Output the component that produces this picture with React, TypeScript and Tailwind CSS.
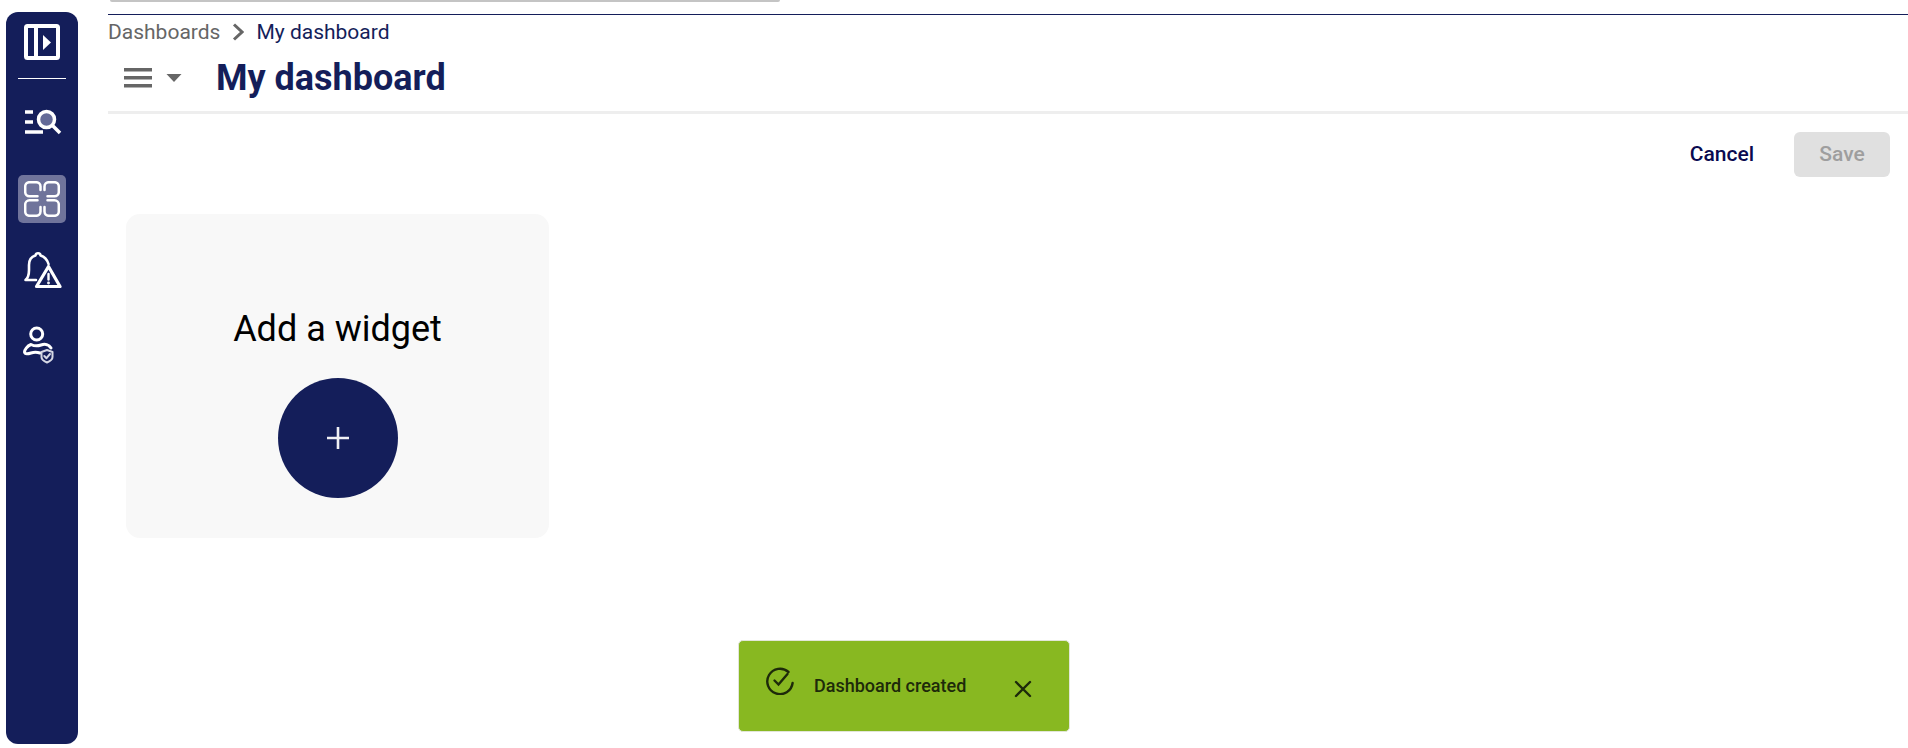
import React from "react";

const font = { fontFamily: "Roboto, sans-serif" };

function PanelIcon() {
  return (
    <svg width="36" height="36" viewBox="0 0 36 36" fill="none">
      <rect x="2" y="2" width="32" height="32" rx="1.5" stroke="white" strokeWidth="4" />
      <rect x="10" y="2" width="4" height="32" fill="white" />
      <path d="M19 11 L27 18.5 L19 26 Z" fill="white" />
    </svg>
  );
}

function SearchListIcon() {
  return (
    <svg width="38" height="26" viewBox="0 0 38 26" fill="none">
      <path d="M0 3H8M0 13H8M0 23H18" stroke="white" strokeWidth="3.500" />
      <circle cx="21.500" cy="10.500" r="8" fill="#646a98" stroke="white" strokeWidth="3.500" />
      <path d="M27.500 16.500L35 24" stroke="white" strokeWidth="3.500" />
    </svg>
  );
}

function GridIcon() {
  return (
    <svg width="36" height="36" viewBox="0 0 36 36" fill="none" stroke="white" strokeWidth="2.500" strokeLinecap="round">
      <path d="M13.500 15.300H5.500A4.300 4.300 0 0 1 1.200 11V5.500A4.300 4.300 0 0 1 5.500 1.200H12.200A4.300 4.300 0 0 1 16.500 5.500V9" />
      <path d="M23.500 15.300H30.500A4.300 4.300 0 0 0 34.800 11V5.500A4.300 4.300 0 0 0 30.500 1.200H24.800A4.300 4.300 0 0 0 20.500 5.500V9" />
      <path d="M13.500 19.300H5.500A4.300 4.300 0 0 0 1.200 23.600V30.500A4.300 4.300 0 0 0 5.500 34.800H12.200A4.300 4.300 0 0 0 16.500 30.500V26" />
      <path d="M23.500 19.300H30.500A4.300 4.300 0 0 1 34.800 23.600V30.500A4.300 4.300 0 0 1 30.500 34.800H24.800A4.300 4.300 0 0 1 20.500 30.500V26" />
    </svg>
  );
}

function BellIcon() {
  return (
    <svg width="38" height="38" viewBox="0 0 38 38" fill="none" stroke="white" strokeLinejoin="round" strokeLinecap="round">
      <path d="M12 29H1.500C4 27 5 24 5 19V14C5 8.500 8 5.500 11.500 4.500C11.500 1.500 16.500 1.500 16.500 4.500C20 5.500 23 8 24.500 13" strokeWidth="2.600" />
      <path d="M24.500 15.500L36 35.500H12.500Z" strokeWidth="3.200" />
      <path d="M24.500 23V28.500" strokeWidth="2.400" />
      <circle cx="24.500" cy="32" r="0.600" strokeWidth="1.600" />
    </svg>
  );
}

function UserShieldIcon() {
  return (
    <svg width="34" height="38" viewBox="0 0 34 38" fill="none" strokeLinecap="round" strokeLinejoin="round">
      <circle cx="13.700" cy="8" r="6" stroke="white" strokeWidth="3" />
      <path d="M28 22C26 18.500 22 17.500 18 19C14 20.500 11 20 8 18.500C4 20 1.500 24 1.500 26C2 28.500 5 28 8 27C11 26 14 26 17 27" stroke="white" strokeWidth="3" />
      <path d="M18.500 26L24 24L29.500 26V31C29.500 33.500 26.500 35.500 24 36.500C21.500 35.500 18.500 33.500 18.500 31Z" fill="#141e5a" stroke="#d5d7e4" strokeWidth="2" />
      <path d="M21.300 30L23.500 32.200L27 28" stroke="#d5d7e4" strokeWidth="2" />
    </svg>
  );
}

function Hamburger() {
  return (
    <svg width="28" height="20" viewBox="0 0 28 20" fill="#666666">
      <rect x="0" y="0" width="28" height="3.500" />
      <rect x="0" y="8" width="28" height="3.500" />
      <rect x="0" y="16" width="28" height="3.500" />
    </svg>
  );
}

function Caret() {
  return (
    <svg width="16" height="8" viewBox="0 0 16 8" fill="#666666">
      <path d="M0.500 0H15.500L8 8Z" />
    </svg>
  );
}

function Chevron() {
  return (
    <svg width="12" height="18" viewBox="0 0 12 18" fill="none" stroke="#666666" strokeWidth="3">
      <path d="M2 1.500L10 9L2 16.500" />
    </svg>
  );
}

function CheckCircle() {
  return (
    <svg width="28" height="28" viewBox="0 0 28 28" fill="none" stroke="#1d2a0a" strokeWidth="2.400" strokeLinecap="round">
      <path d="M22.500 5A12.700 12.700 0 1 0 26.600 16" />
      <path d="M8.500 13.500L12.500 17.500L21.500 7" />
    </svg>
  );
}

function Close() {
  return (
    <svg width="18" height="18" viewBox="0 0 18 18" fill="none" stroke="#1d2a0a" strokeWidth="2.400" strokeLinecap="round">
      <path d="M2 2L16 16M16 2L2 16" />
    </svg>
  );
}

export default function App() {
  return (
    <div className="relative flex h-[748px] w-[1908px] overflow-hidden bg-white" style={font}>
      <aside className="ml-[6px] mt-[12px] flex h-[732px] w-[72px] shrink-0 flex-col items-center rounded-[12px] bg-[#141e5a]">
        <div className="mt-[12px]">
          <PanelIcon />
        </div>
        <div className="mt-[18px] h-px w-[48px] bg-white" />
        <div className="ml-[4px] mt-[30px]">
          <SearchListIcon />
        </div>
        <div className="mt-[40px] flex h-[48px] w-[48px] items-center justify-center rounded-[5px] bg-[#70749b]">
          <GridIcon />
        </div>
        <div className="mt-[28px] ml-[2px]">
          <BellIcon />
        </div>
        <div className="mt-[37px] mr-[4px]">
          <UserShieldIcon />
        </div>
      </aside>

      <main className="ml-[30px] flex min-w-0 flex-1 flex-col">
        <div className="h-[14px] shrink-0">
          <div className="ml-[2px] h-[2px] w-[670px] rounded-b-[3px] border-b-2 border-[#c4c4c4]" />
        </div>
        <div className="h-px shrink-0 bg-[#141e5a]" />
        <nav className="mt-[7px] flex h-[20px] items-center text-[21px] leading-[20px]">
          <span className="text-[#666666]">Dashboards</span>
          <span className="ml-[12px] mr-[12px] flex">
            <Chevron />
          </span>
          <span className="text-[#141e5a]">My dashboard</span>
        </nav>
        <header className="mt-[11px] flex h-[50px] items-center">
          <div className="ml-[16px] flex items-center">
            <Hamburger />
            <span className="ml-[14px] flex">
              <Caret />
            </span>
          </div>
          <h1 className="ml-[34px] text-[36px] font-bold leading-[50px] text-[#141e5a]">My dashboard</h1>
        </header>
        <div className="mt-[8px] h-[3px] shrink-0 bg-[#eeeeee]" />

        <div className="mt-[18px] flex items-center justify-end pr-[18px]">
          <button className="text-[21px] font-medium leading-[45px] text-[#0a0a50]">Cancel</button>
          <button className="ml-[40px] h-[45px] w-[96px] rounded-[6px] bg-[#e0e0e0] text-[21px] font-medium text-[#9e9e9e]">
            Save
          </button>
        </div>

        <section className="ml-[18px] mt-[37px] flex h-[324px] w-[423px] flex-col items-center rounded-[14px] bg-[#f8f8f8]">
          <h2 className="mt-[93px] text-[36px] font-normal leading-[44px] text-black">Add a widget</h2>
          <button className="mt-[27px] flex h-[120px] w-[120px] items-center justify-center rounded-full bg-[#141e5a]">
            <svg width="22" height="22" viewBox="0 0 22 22" stroke="#f0f0f5" strokeWidth="2.600">
              <path d="M11 0V22M0 11H22" />
            </svg>
          </button>
        </section>
      </main>

      <div className="absolute left-[738px] top-[640px] flex h-[92px] w-[332px] rounded-[5px] border border-[#e2e6d8] bg-[#88b821] text-[#1d2a0a]">
        <div className="ml-[27px] mt-[26px]">
          <CheckCircle />
        </div>
        <div className="ml-[20px] mt-[35px] text-[18px] font-medium leading-[20px]">Dashboard created</div>
        <div className="ml-[48px] mt-[39px]">
          <Close />
        </div>
      </div>
    </div>
  );
}
